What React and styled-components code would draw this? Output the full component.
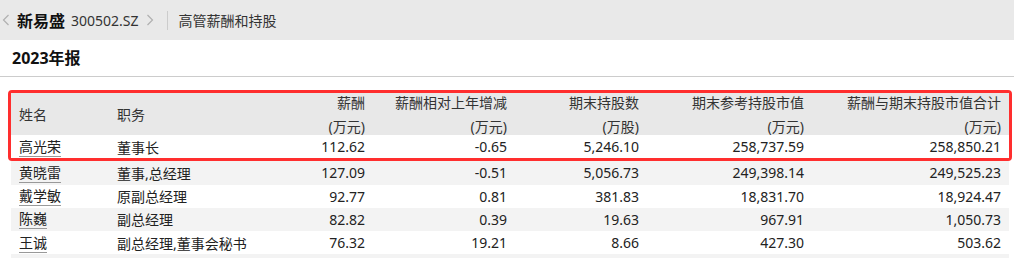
import styled, { createGlobalStyle } from "styled-components"

const GlobalStyle = createGlobalStyle`
    body{
        margin: 0;
        background: #ffffff;
        font-family: "Noto Sans", "Noto Sans CJK SC", sans-serif;
        color: #222222;
    }
`

const columns = "98px 141px 123px 142px 132px 165px 197px"

const heads = [
    { title: "姓名", left: true },
    { title: "职务", left: true },
    { title: "薪酬", unit: "(万元)" },
    { title: "薪酬相对上年增减", unit: "(万元)" },
    { title: "期末持股数", unit: "(万股)" },
    { title: "期末参考持股市值", unit: "(万元)" },
    { title: "薪酬与期末持股市值合计", unit: "(万元)" },
]

const rows = [
    ["高光荣", "董事长", "112.62", "-0.65", "5,246.10", "258,737.59", "258,850.21"],
    ["黄晓雷", "董事,总经理", "127.09", "-0.51", "5,056.73", "249,398.14", "249,525.23"],
    ["戴学敏", "原副总经理", "92.77", "0.81", "381.83", "18,831.70", "18,924.47"],
    ["陈巍", "副总经理", "82.82", "0.39", "19.63", "967.91", "1,050.73"],
    ["王诚", "副总经理,董事会秘书", "76.32", "19.21", "8.66", "427.30", "503.62"],
]

function Chevron({ right }){
    return(
        <svg width="8" height="12" viewBox="0 0 8 12">
            <polyline
                points={right ? "1.5,1 6.5,6 1.5,11" : "6.5,1 1.5,6 6.5,11"}
                fill="none"
                stroke="#b0b0b0"
                strokeWidth="1.2"
            />
        </svg>
    )
}

function Row({ r, stripe }){
    return(
        <DataRow stripe={stripe}>
            <Cell left><Name>{r[0]}</Name></Cell>
            <Cell left>{r[1]}</Cell>
            {r.slice(2).map((v, i) => <Cell key={i}>{v}</Cell>)}
        </DataRow>
    )
}

export default function App(){
    return(
        <>
            <GlobalStyle/>
            <TopBar>
                <Chevron/>
                <Company>新易盛</Company>
                <Code>300502.SZ</Code>
                <Chevron right/>
                <Divider/>
                <PageTitle>高管薪酬和持股</PageTitle>
            </TopBar>
            <Section>2023年报</Section>
            <Table>
                <Highlight>
                    <HeadRow>
                        {heads.map((h) =>
                            <HeadCell key={h.title} left={h.left}>
                                <span>{h.title}</span>
                                {h.unit && <span>{h.unit}</span>}
                            </HeadCell>
                        )}
                    </HeadRow>
                    <Row r={rows[0]} stripe={false}/>
                </Highlight>
                {rows.slice(1).map((r, i) => <Row key={r[0]} r={r} stripe={i % 2 === 0}/>)}
                <DataRow stripe/>
            </Table>
        </>
    )
}

const TopBar = styled.div`
    height: 40px;
    background-color: #e9e9e9;
    display: flex;
    align-items: center;
    padding-left: 2px;
    svg{
        flex: none;
    }
`
const Company = styled.span`
    margin-left: 7px;
    font-size: 16px;
    font-weight: 700;
    color: #111111;
`
const Code = styled.span`
    margin-left: 6px;
    margin-right: 7px;
    font-size: 14px;
    color: #333333;
`
const Divider = styled.div`
    width: 1px;
    height: 19px;
    margin-left: 13px;
    background-color: #cccccc;
`
const PageTitle = styled.span`
    margin-left: 11px;
    font-size: 14px;
    color: #333333;
`
const Section = styled.div`
    height: 36px;
    line-height: 36px;
    padding-left: 12px;
    font-size: 16px;
    font-weight: 700;
    color: #111111;
    border-bottom: 1px solid #cccccc;
`
const Table = styled.div`
    margin: 13px 5px 0 11px;
    font-size: 14px;
`
const Highlight = styled.div`
    margin: 0 -3px;
    border: 3px solid #ff2e2e;
    border-radius: 4px;
`
const HeadRow = styled.div`
    display: grid;
    grid-template-columns: ${columns};
    height: 42px;
    background-color: #e8e8e8;
    color: #333333;
`
const HeadCell = styled.div`
    display: flex;
    flex-direction: column;
    justify-content: center;
    align-items: ${p => p.left ? "flex-start" : "flex-end"};
    gap: 4px;
    padding: 0 8px 3px;
    line-height: 20px;
    white-space: nowrap;
`
const DataRow = styled.div`
    display: grid;
    grid-template-columns: ${columns};
    height: ${p => p.stripe === false ? "23px" : "23.5px"};
    background-color: ${p => p.stripe ? "#f3f3f3" : "#ffffff"};
`
const Cell = styled.div`
    display: flex;
    align-items: center;
    justify-content: ${p => p.left ? "flex-start" : "flex-end"};
    padding: 0 8px;
    white-space: nowrap;
`
const Name = styled.span`
    display: inline-block;
    line-height: 18px;
    border-bottom: 1px solid #999999;
    margin-top: 1px;
`
